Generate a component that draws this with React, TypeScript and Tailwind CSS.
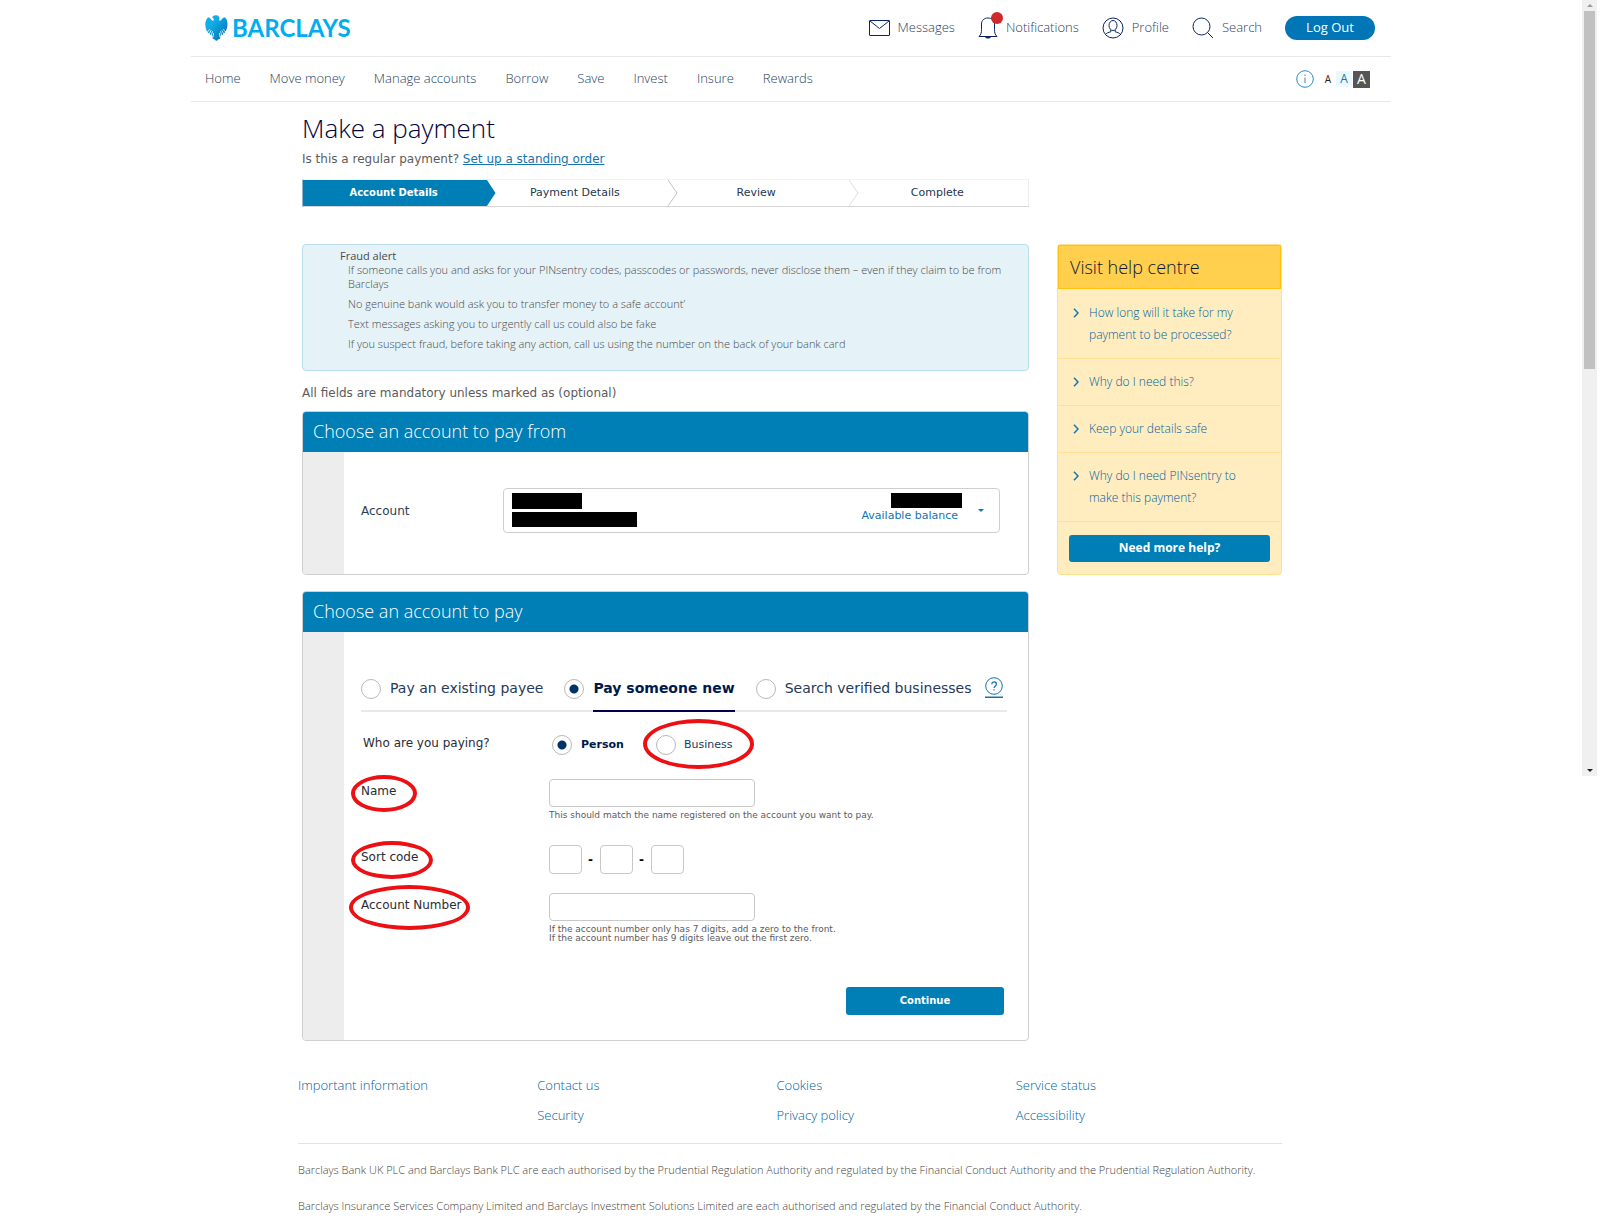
import { useState } from 'react';
import type { ReactNode } from 'react';

const NAV = ['Home', 'Move money', 'Manage accounts', 'Borrow', 'Save', 'Invest', 'Insure', 'Rewards'];
const STEPS = ['Account Details', 'Payment Details', 'Review', 'Complete'];

const FRAUD_TIPS = [
  'If someone calls you and asks for your PINsentry codes, passcodes or passwords, never disclose them – even if they claim to be from Barclays',
  'No genuine bank would ask you to transfer money to a safe account’',
  'Text messages asking you to urgently call us could also be fake',
  'If you suspect fraud, before taking any action, call us using the number on the back of your bank card',
];

const HELP = [
  'How long will it take for my payment to be processed?',
  'Why do I need this?',
  'Keep your details safe',
  'Why do I need PINsentry to make this payment?',
];

const FOOTER = [['Important information'], ['Contact us', 'Security'], ['Cookies', 'Privacy policy'], ['Service status', 'Accessibility']];

const LEGAL = [
  'Barclays Bank UK PLC and Barclays Bank PLC are each authorised by the Prudential Regulation Authority and regulated by the Financial Conduct Authority and the Prudential Regulation Authority.',
  'Barclays Insurance Services Company Limited and Barclays Investment Solutions Limited are each authorised and regulated by the Financial Conduct Authority.',
];

const VERDANA = "font-[Verdana,'DejaVu_Sans',sans-serif]";
const RADIO =
  'size-5 shrink-0 appearance-none rounded-full border border-[#b8b8b8] bg-white checked:bg-[radial-gradient(circle,#003366_4px,transparent_5px)]';
const FIELD = 'rounded border border-[#c8c8c8] bg-white px-2 text-xs';

export default function App() {
  return (
    <div className="flex items-start bg-white font-['Open_Sans',sans-serif] text-[#5b5b5b]">
      <div className="min-w-0 flex-1">
        <Header />
        <main className="mx-auto max-w-[982px] pt-[6px] pl-[2px]">
          <h1 className="text-[26px] leading-10 font-light text-[#00003c]">Make a payment</h1>
          <p className={`pt-px text-[12px] leading-5 ${VERDANA}`}>
            Is this a regular payment?{' '}
            <a href="#standing-order" className="text-[#1474b0] underline">Set up a standing order</a>
          </p>
          <Stepper />
          <div className="mt-[37px] flex items-start gap-7">
            <div className="min-w-0 flex-1">
              <FraudAlert />
              <p className={`mt-3 mb-2 text-[12px] leading-5 ${VERDANA}`}>
                All fields are mandatory unless marked as (optional)
              </p>
              <PayFrom />
              <PayTo />
            </div>
            <HelpCentre />
          </div>
        </main>
        <Footer />
      </div>
      <ScrollTrack />
    </div>
  );
}

function Header() {
  return (
    <header className="mx-auto max-w-[1200px]">
      <div className="flex h-[57px] items-center justify-between border-b border-[#e8e8e8] pr-4 pl-[14px]">
        <a href="#home" className="flex items-center gap-1 text-[#00aeef]">
          <Eagle />
          <span className="pb-px font-[Lato,sans-serif] text-2xl leading-8 font-bold">BARCLAYS</span>
        </a>
        <div className="flex items-center gap-[23px] text-[13px] font-light text-[#1f3f60]">
          <a href="#messages" className="flex items-center gap-2">
            <svg viewBox="0 0 21 16" className="h-4 w-[21px]" fill="none" stroke="#0c2466">
              <rect x=".5" y=".5" width="20" height="15" rx=".5" />
              <path d="M1 1l9.500 7.500L20 1" />
            </svg>
            Messages
          </a>
          <a href="#notifications" className="relative flex items-center gap-2">
            <svg viewBox="0 0 20 22" className="h-[22px] w-5" fill="none" stroke="#0c2466">
              <path d="M1 19.500h18M1 19.500c2-2 2.500-4 2.500-7V7c0-3.500 2.500-6 6.500-6s6.500 2.500 6.500 6v5.500c0 3 .5 5 2.500 7" />
              <path d="M7.500 20c.3 1.400 4.700 1.400 5 0z" fill="#0c2466" />
            </svg>
            <span className="absolute -top-[5px] left-[13px] size-3 rounded-full bg-[#cf2a2a]" />
            Notifications
          </a>
          <a href="#profile" className="flex items-center gap-2">
            <svg viewBox="0 0 22 22" className="size-[22px]" fill="none" stroke="#0c2466">
              <circle cx="11" cy="11" r="10" />
              <ellipse cx="11" cy="8.500" rx="4" ry="5" />
              <path d="M3.500 17.500c1-1.500 3-2.200 5.300-2.700v-1.800M18.500 17.500c-1-1.500-3-2.200-5.300-2.700v-1.800" />
            </svg>
            Profile
          </a>
          <a href="#search" className="flex items-center gap-2">
            <svg viewBox="0 0 22 22" className="size-[22px]" fill="none" stroke="#0c2466">
              <circle cx="9.500" cy="9.500" r="8.500" />
              <path d="M15.500 15.500l5.500 5.500" />
            </svg>
            Search
          </a>
          <button type="button" className="h-6 w-[90px] rounded-full bg-[#0076b6] text-[13px] font-normal text-white">
            Log Out
          </button>
        </div>
      </div>
      <div className="flex h-[45px] items-center justify-between border-b border-[#e8e8e8] pr-[21px] pl-[14px]">
        <nav className="flex gap-[29px] text-[13px] font-light text-[#1f3f60]">
          {NAV.map((item) => (
            <a key={item} href="#nav">{item}</a>
          ))}
        </nav>
        <div className="flex items-center text-[#222]">
          <svg viewBox="0 0 18 18" className="mr-[6px] size-[18px]" fill="none" stroke="#2a8ccb">
            <circle cx="9" cy="9" r="8.300" />
            <path d="M9 7.500v5.500M9 4.500v1.500" />
          </svg>
          <button type="button" aria-label="Small text" className="size-4 text-[10px] leading-4">A</button>
          <button type="button" aria-label="Medium text" className="size-4 bg-[#ebf8ff] text-xs leading-4 text-[#1474b0]">A</button>
          <button type="button" aria-label="Large text" className="ml-px size-[17px] bg-[#555] text-sm leading-4 text-white">A</button>
        </div>
      </div>
    </header>
  );
}

function Eagle() {
  return (
    <svg viewBox="0 0 23 26" className="h-[26px] w-[23px]">
      <defs>
        <linearGradient id="eagle" x1="0" y1="0" x2="1" y2="1">
          <stop offset=".3" stopColor="#12aeea" />
          <stop offset="1" stopColor="#0068ad" />
        </linearGradient>
      </defs>
      <path
        fill="url(#eagle)"
        d="M7.200 2.200C8.200.800 9.800.200 11.300.300c2 .1 3.200 1.400 3.100 3-.1.900-.4 1.500-.2 2 .3.600 1.300.500 1.900-.2C17 4 17.700 2.700 19.400 2.300c2 .7 3.200 3.700 3.100 7.200-.1 4.200-1.700 7.500-4 9.500-1.300 1.200-2.300 1.300-3.300 1.900.3 1.300.2 2.300-.5 3.200-.7.300-1.200.2-1.700.4-.5.800-1 1.200-1.600 1.200s-1.200-.4-1.600-1.200c-.6-.2-1.200-.1-1.700-.5-.6-.8-.7-1.900-.4-3.100-1.200-.5-2.100-.8-3.200-1.800C2 17.200.300 13.700.300 9.500c0-3.500 1.300-6.500 3.300-7.300 1.500.400 2.200 1.700 3 2.900.5.700 1.400.9 1.900.3.500-.700.2-1.900-.5-2.500-.3-.2-.6-.4-.8-.7z"
      />
      <path
        fill="none"
        stroke="#fff"
        strokeWidth=".8"
        strokeLinecap="round"
        d="M2 17.500l2.600-3M3.800 19.600l2.200-4M6 21.200l1.400-4.500M8 22l.5-3.500M21 17.500l-2.600-3M19.200 19.600l-2.200-4M17 21.200l-1.400-4.500M15 22l-.5-3.500"
      />
    </svg>
  );
}

function Stepper() {
  return (
    <ol className={`mt-[10px] flex h-7 max-w-[727px] border border-t-[#f3f3f3] border-r-[#ececec] border-b-[#d6d6d6] border-l-[#8fb3cc] text-center text-[11px] leading-[26px] text-[#26364d] ${VERDANA}`}>
      {STEPS.map((step, i) => (
        <li key={step} className={`relative flex-1 ${i === 0 ? 'bg-[#007eb6] text-[10px] font-bold text-white' : ''}`}>
          {step}
          {i < 3 && (
            <svg viewBox="0 0 12 26" className="absolute top-0 left-full h-[26px] w-3" fill="none">
              {i === 0 ? <path d="M0 0h3l8.500 13L3 26H0z" fill="#007eb6" /> : <path d="M2 0l9 13L2 26" stroke={i === 1 ? '#c4c4c4' : '#dedede'} />}
            </svg>
          )}
        </li>
      ))}
    </ol>
  );
}

function FraudAlert() {
  return (
    <section className="rounded-sm border border-[#b9ddec] bg-[#e5f2f8] pt-1 pr-5 pb-[19px] pl-[37px] text-[11px] leading-[14px]">
      <h2 className="font-medium text-[#4a4a4a]">Fraud alert</h2>
      <ul className="flex flex-col gap-[6px] pl-2 font-light text-[#4a4a4a]">
        {FRAUD_TIPS.map((tip) => (
          <li key={tip}>{tip}</li>
        ))}
      </ul>
    </section>
  );
}

function Panel({ title, children }: { title: string; children: ReactNode }) {
  return (
    <section className="mb-4 overflow-hidden rounded border border-[#cfcfcf]">
      <h2 className="bg-[#007eb6] px-[10px] pb-[2px] text-lg leading-[38px] font-light text-white">{title}</h2>
      <div className="flex">
        <div className="w-[41px] shrink-0 bg-[#ededed]" />
        <div className="min-w-0 flex-1">{children}</div>
      </div>
    </section>
  );
}

function PayFrom() {
  return (
    <Panel title="Choose an account to pay from">
      <div className="flex items-center pt-9 pr-7 pb-[41px] pl-[17px]">
        <label htmlFor="account" className={`w-[142px] text-[12px] text-[#2c3e55] ${VERDANA}`}>Account</label>
        <div className="relative flex-1">
          <select id="account" className="block h-[45px] w-full appearance-none rounded border border-[#cfcfcf] bg-white">
            <option />
          </select>
          <div className="pointer-events-none absolute inset-0 flex items-start justify-between pt-[5px] pr-4 pl-[9px]">
            <div className="flex flex-col gap-[3px]">
              <span className="h-4 w-[70px] bg-black" />
              <span className="h-[15px] w-[125px] bg-black" />
            </div>
            <div className="flex items-center gap-4">
              <div className="flex flex-col items-end">
                <span className="h-[15px] w-[71px] bg-black" />
                <span className={`pr-1 text-[11px] leading-4 text-[#1474b0] ${VERDANA}`}>Available balance</span>
              </div>
              <svg viewBox="0 0 6 3" className="mt-1 h-[3px] w-[6px]"><path d="M0 0h6L3 3z" fill="#007eb6" /></svg>
            </div>
          </div>
        </div>
      </div>
    </Panel>
  );
}

/* Label text with a red ring drawn round it */
function Ringed({ ring, children }: { ring: string; children: ReactNode }) {
  return (
    <span className="relative inline-block">
      {children}
      <span className={`pointer-events-none absolute rounded-[50%] border-4 border-[#ec0f14] ${ring}`} />
    </span>
  );
}

function PayTo() {
  const [mode, setMode] = useState('new');
  const modes = [
    { id: 'existing', label: 'Pay an existing payee' },
    { id: 'new', label: 'Pay someone new' },
    { id: 'verified', label: 'Search verified businesses' },
  ];

  return (
    <Panel title="Choose an account to pay">
      <form className={`pt-11 pr-[21px] pb-[25px] pl-[17px] text-[12px] leading-6 text-[#2b2b33] ${VERDANA}`}>
        <div className="flex h-9 gap-[21px] border-b-2 border-[#e8e8e8] text-[14px] text-[#25395a]">
          {modes.map((m) => (
            <label key={m.id} className="flex gap-[9px] whitespace-nowrap">
              <input type="radio" name="mode" className={`mt-[3px] ${RADIO}`} checked={mode === m.id} onChange={() => setMode(m.id)} />
              <span className={mode === m.id ? 'h-9 border-b-2 border-[#00004c] font-bold text-[#00194c]' : ''}>{m.label}</span>
            </label>
          ))}
          <a href="#help" aria-label="Help" className="-ml-2">
            <svg viewBox="0 0 18 21" className="mt-px h-[21px] w-[18px]" fill="none" stroke="#1474b0">
              <circle cx="9" cy="9" r="8.300" />
              <path d="M6.800 7.200c0-3 4.600-3 4.600 0 0 1.800-2.300 1.700-2.300 3.800M9.100 12.300v1.200" strokeWidth="1.200" />
              <path d="M0 20.300h18" strokeWidth="1.400" />
            </svg>
          </a>
        </div>

        <div role="radiogroup" aria-label="Who are you paying?" className="mt-[21px] flex h-6">
          <span className="w-[191px] pl-[2px] leading-5">Who are you paying?</span>
          <div className="flex items-center text-[11px]">
            <label className="flex items-center gap-[9px] font-bold text-[#00194c]">
              <input type="radio" name="who" defaultChecked className={RADIO} />
              Person
            </label>
            <label className="ml-8 flex">
              <Ringed ring="-top-[14px] -bottom-[12px] -left-[13px] -right-[22px]">
                <span className="flex items-center gap-2 text-[#25395a]">
                  <input type="radio" name="who" className={RADIO} />
                  Business
                </span>
              </Ringed>
            </label>
          </div>
        </div>

        <div className="mt-[22px] flex">
          <label htmlFor="name" className="w-[188px]">
            <Ringed ring="-top-[4px] -bottom-[9px] -left-[10px] -right-[21px]">Name</Ringed>
          </label>
          <div>
            <input id="name" type="text" className={`block h-7 w-[206px] ${FIELD}`} />
            <p className="mt-[3px] text-[9px] leading-[10px] text-[#5b5b5b]">
              This should match the name registered on the account you want to pay.
            </p>
          </div>
        </div>

        <div className="mt-[25px] flex">
          <label htmlFor="sort-1" className="w-[188px]">
            <Ringed ring="-top-[4px] -bottom-[10px] -left-[10px] -right-[15px]">Sort code</Ringed>
          </label>
          <div className="flex items-center gap-[6px] font-bold text-black">
            <input id="sort-1" type="text" aria-label="Sort code, first pair" className={`h-[29px] w-[33px] ${FIELD}`} />
            <span className="w-[6px]">-</span>
            <input type="text" aria-label="Sort code, second pair" className={`h-[29px] w-[33px] ${FIELD}`} />
            <span className="w-[6px]">-</span>
            <input type="text" aria-label="Sort code, third pair" className={`h-[29px] w-[33px] ${FIELD}`} />
          </div>
        </div>

        <div className="mt-[19px] flex">
          <label htmlFor="number" className="w-[188px]">
            <Ringed ring="-top-[8px] -bottom-[13px] -left-[12px] -right-[9px]">Account Number</Ringed>
          </label>
          <div>
            <input id="number" type="text" className={`block h-7 w-[206px] ${FIELD}`} />
            <p className="mt-1 text-[9px] leading-[9px] text-[#5b5b5b]">
              If the account number only has 7 digits, add a zero to the front.
              <br />
              If the account number has 9 digits leave out the first zero.
            </p>
          </div>
        </div>

        <div className="mt-11 flex justify-end pr-[3px]">
          <button type="button" className="h-7 w-[158px] rounded-[3px] bg-[#007eb6] text-[10px] font-bold text-white">
            Continue
          </button>
        </div>
      </form>
    </Panel>
  );
}

function HelpCentre() {
  return (
    <aside className="w-[225px] shrink-0 rounded-sm border border-[#ffe08f] bg-[#ffedc0]">
      <h2 className="border border-[#ffc20e] bg-[#ffcf4d] px-[11px] text-lg leading-[42px] font-light text-[#0d1538]">Visit help centre</h2>
      <ul className="pt-px text-[12px] leading-[22px] font-light text-[#005f9e]">
        {HELP.map((item) => (
          <li key={item} className="border-b border-[#ffe196] py-3 pr-9 pl-[15px]">
            <a href="#help" className="flex gap-[10px]">
              <svg viewBox="0 0 6 10" className="mt-[6px] h-[10px] w-[6px] shrink-0" fill="none" stroke="#1474b0" strokeWidth="1.500">
                <path d="M1 .8L5 5 1 9.200" />
              </svg>
              {item}
            </a>
          </li>
        ))}
      </ul>
      <div className="px-[11px] py-3">
        <button type="button" className="h-[27px] w-full rounded-[3px] bg-[#007eb6] text-[12px] font-bold text-white">
          Need more help?
        </button>
      </div>
    </aside>
  );
}

function Footer() {
  return (
    <footer className="mx-auto mt-[13px] max-w-[986px] pr-[2px] font-light">
      <div className="flex border-b border-[#e3e3e3] pr-[27px] pb-[13px] text-[13px] leading-[30px] text-[#005f9e]">
        {FOOTER.map((column) => (
          <ul key={column[0]} className="flex-1">
            {column.map((item) => (
              <li key={item}><a href="#footer">{item}</a></li>
            ))}
          </ul>
        ))}
      </div>
      <div className="flex flex-col gap-4 pt-4 text-[11px] leading-5 text-[#444]">
        {LEGAL.map((line) => (
          <p key={line}>{line}</p>
        ))}
      </div>
    </footer>
  );
}

function ScrollTrack() {
  return (
    <div className="mr-[3px] flex h-[776px] w-[15px] shrink-0 flex-col items-center bg-[#f0f0f0]">
      <svg viewBox="0 0 6 3" className="my-1 h-[3px] w-[6px]"><path d="M0 3h6L3 0z" fill="#9a9a9a" /></svg>
      <div className="h-[358px] w-[11px] bg-[#c1c1c1]" />
      <svg viewBox="0 0 6 3" className="mt-auto mb-1 h-[3px] w-[6px]"><path d="M0 0h6L3 3z" fill="#222" /></svg>
    </div>
  );
}
